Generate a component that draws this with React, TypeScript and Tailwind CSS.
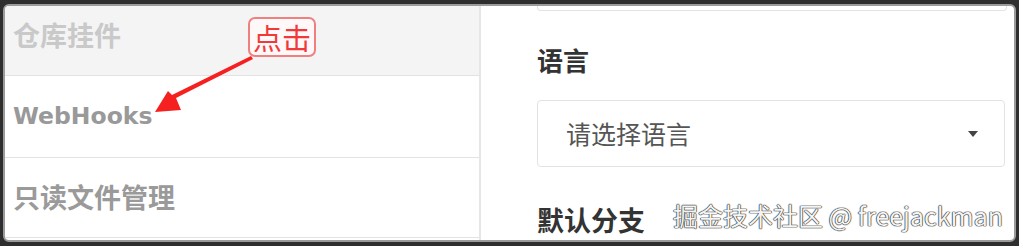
export default function App() {
  return (
    <div className="relative h-[246px] w-[1019px] bg-[#2e2e2e] px-[3px] pb-[4px] pt-[4px] [font-family:'Noto_Sans_CJK_SC',sans-serif]">
      <div className="flex h-full overflow-hidden rounded-[6px] border-2 border-[#9b9b9b] bg-white">
        {/* left menu */}
        <div className="flex w-[476px] shrink-0 flex-col border-r-2 border-[#e6e6e6]">
          <div className="flex h-[70px] items-center border-b border-[#e2e2e2] bg-[#f4f4f4] pb-[10px] pl-[8px] text-[27px] font-bold text-[#c9c9c9]">
            仓库挂件
          </div>
          <div className="flex h-[82px] items-center border-b border-[#e2e2e2] pl-[8px] text-[23.5px] font-bold text-[#999] [font-family:'DejaVu_Sans',sans-serif]">
            WebHooks
          </div>
          <div className="flex h-[80px] items-center border-b border-[#e2e2e2] pl-[8px] text-[27px] font-bold text-[#9a9a9a]">
            只读文件管理
          </div>
        </div>

        {/* right form */}
        <div className="flex-1 pl-[56px]">
          <div className="h-[5px] w-[470px] rounded-b-[4px] border-x border-b border-[#e3e3e3]" />
          <div className="mt-[31px] text-[26px] font-bold leading-[36px] text-[#333]">语言</div>
          <div className="mt-[22px] flex h-[67px] w-[468px] items-center justify-between rounded-[4px] border border-[#e3e3e3] pl-[28px] pr-[26px]">
            <span className="text-[25px] text-[#555]">请选择语言</span>
            <svg width="10" height="6" viewBox="0 0 10 6">
              <path d="M0 0h10L5 6z" fill="#444" />
            </svg>
          </div>
          <div className="mt-[35px] text-[27px] font-bold leading-[36px] text-[#333]">默认分支</div>
        </div>
      </div>

      {/* annotation */}
      <div className="absolute left-[248px] top-[17px] flex h-[40px] w-[68px] items-center justify-center rounded-[7px] border-2 border-[#f08080] bg-[#fff8f8] text-[29px] leading-none text-[#f03a3a]">
        点击
      </div>
      <svg className="absolute left-0 top-0" width="1019" height="246" viewBox="0 0 1019 246">
        <path d="M251 56 L253 59 L176 98 L181 110 L155 112 L168 91 L172 95 Z" fill="#f52020" />
      </svg>

      {/* watermark */}
      <div className="absolute left-[673px] top-[198px] text-[25px] leading-[34px] text-[#f4f4f4] [text-shadow:0_0_1px_#333,0_0_1px_#333,0_0_1px_#333,0_0_1px_#333]">
        掘金技术社区 @ freejackman
      </div>
    </div>
  )
}
